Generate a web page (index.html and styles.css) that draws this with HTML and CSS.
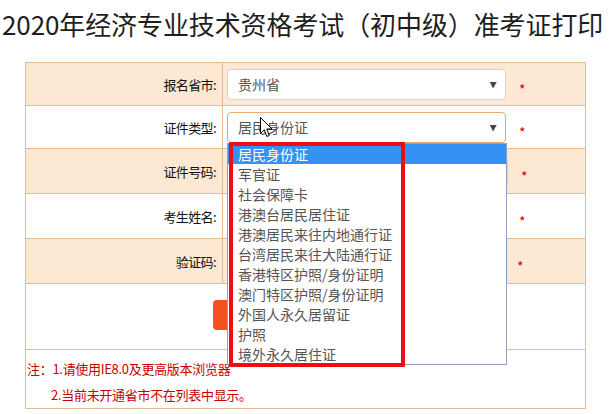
FILE: index.html
```html
<!DOCTYPE html>
<html lang="zh-CN">
<head>
<meta charset="utf-8">
<title>准考证打印</title>
<link rel="stylesheet" href="styles.css">
</head>
<body>
<h1 class="title">2020年经济专业技术资格考试（初中级）准考证打印</h1>
<div class="form-wrap">
  <table class="form">
    <tr class="row shade r1">
      <td class="label">报名省市:</td>
      <td class="field"><div class="select"><span>贵州省</span><i class="arrow">▼</i></div><span class="req">*</span></td>
    </tr>
    <tr class="row r2">
      <td class="label">证件类型:</td>
      <td class="field"><div class="select focus"><span>居民身份证</span><i class="arrow">▼</i></div><span class="req">*</span></td>
    </tr>
    <tr class="row shade r3">
      <td class="label">证件号码:</td>
      <td class="field"><div class="input wide"></div><span class="req">*</span></td>
    </tr>
    <tr class="row r4">
      <td class="label">考生姓名:</td>
      <td class="field"><div class="input"></div><span class="req">*</span></td>
    </tr>
    <tr class="row shade r5">
      <td class="label">验证码:</td>
      <td class="field"><div class="input narrow"></div><span class="req">*</span></td>
    </tr>
    <tr class="btn-row">
      <td colspan="2"><div class="btn-line"><span class="btn"></span></div></td>
    </tr>
    <tr class="notes">
      <td colspan="2">
        <p class="note">注：1.请使用IE8.0及更高版本浏览器</p>
        <p class="note indent">2.当前未开通省市不在列表中显示。</p>
      </td>
    </tr>
  </table>

  <ul class="dropdown">
    <li class="active">居民身份证</li>
    <li>军官证</li>
    <li>社会保障卡</li>
    <li>港澳台居民居住证</li>
    <li>港澳居民来往内地通行证</li>
    <li>台湾居民来往大陆通行证</li>
    <li>香港特区护照/身份证明</li>
    <li>澳门特区护照/身份证明</li>
    <li>外国人永久居留证</li>
    <li>护照</li>
    <li>境外永久居住证</li>
  </ul>
  <div class="mark"></div>
  <svg class="cursor" width="13" height="21" viewBox="0 0 13 21">
    <path d="M0.5 0.5 L0.5 16.5 L4.3 12.8 L6.8 19.5 L9.3 18.5 L6.8 12 L12 12 Z" fill="#fff" stroke="#000" stroke-width="1" stroke-linejoin="miter"/>
  </svg>
</div>
</body>
</html>
```
FILE: styles.css
```css
html, body {
  margin: 0;
  padding: 0;
  background: #fff;
}
body {
  width: 612px;
  height: 414px;
  overflow: hidden;
  font-family: "Noto Sans CJK SC", "Noto Sans", sans-serif;
}
.title {
  margin: 7px 0 0 2px;
  font-size: 26px;
  line-height: 34px;
  font-weight: normal;
  color: #1e1e1e;
  white-space: nowrap;
  letter-spacing: -0.1px;
}
.form-wrap {
  position: relative;
  margin-top: 21px;
}
.form {
  margin-left: 25px;
  width: 561px;
  border-collapse: collapse;
  table-layout: fixed;
}
.form td {
  border: 1px solid #e3bc95;
  padding: 0;
}
.row.shade td {
  background: #fce8d3;
}
.r1, .r2 { height: 43px; }
.r3, .r4, .r5 { height: 45px; }
.label {
  width: 190px;
  text-align: right;
  padding-right: 6px !important;
  font-size: 13px;
  color: #111;
  letter-spacing: -0.6px;
}
.field {
  padding-left: 4px !important;
}
.field, .field > * {
  vertical-align: middle;
}
.select {
  display: inline-flex;
  align-items: center;
  justify-content: space-between;
  box-sizing: border-box;
  width: 279px;
  height: 31px;
  padding: 0 8px 0 10px;
  background: #fff;
  border: 1px solid #d3d3d3;
  border-radius: 4px;
  font-size: 14px;
  color: #555;
}
.select.focus {
  border-color: #e5ab72;
}
.arrow {
  font-style: normal;
  font-size: 8px;
  color: #444;
  transform: scaleX(0.9);
}
.input {
  display: inline-block;
  box-sizing: border-box;
  width: 279px;
  height: 31px;
  background: #fff;
  border: 1px solid #d3d3d3;
  border-radius: 4px;
}
.input.wide {
  width: 281px;
}
.input.narrow {
  width: 277px;
}
.req {
  display: inline-block;
  margin-left: 13px;
  color: #d40000;
  font-size: 14px;
  line-height: 14px;
  position: relative;
  top: 5px;
}
.btn-row {
  height: 66px;
}
.btn-line {
  display: flex;
  justify-content: center;
  padding: 1px 0 5px;
}
.btn {
  display: inline-block;
  width: 186px;
  height: 30px;
  background: #f4511e;
  border-radius: 4px;
}
.notes td {
  height: 52px;
  vertical-align: top;
  padding: 6px 0 0 1px;
}
.note {
  margin: 0;
  font-size: 13px;
  line-height: 26px;
  color: #c80000;
  letter-spacing: -0.3px;
}
.note.indent {
  padding-left: 24px;
}
.dropdown {
  position: absolute;
  left: 227px;
  top: 81px;
  width: 278px;
  margin: 0;
  padding: 0;
  list-style: none;
  background: #fff;
  border: 1px solid #8ca2bd;
}
.dropdown li {
  height: 20px;
  line-height: 20px;
  padding-left: 10px;
  font-size: 14px;
  color: #555;
  white-space: nowrap;
}
.dropdown li.active {
  background: #3392f4;
  color: #fff;
}
.mark {
  position: absolute;
  left: 229px;
  top: 80px;
  width: 168px;
  height: 217px;
  border: 4px solid #ec0e14;
  border-radius: 1px;
}
.cursor {
  position: absolute;
  left: 260px;
  top: 55px;
}
```
